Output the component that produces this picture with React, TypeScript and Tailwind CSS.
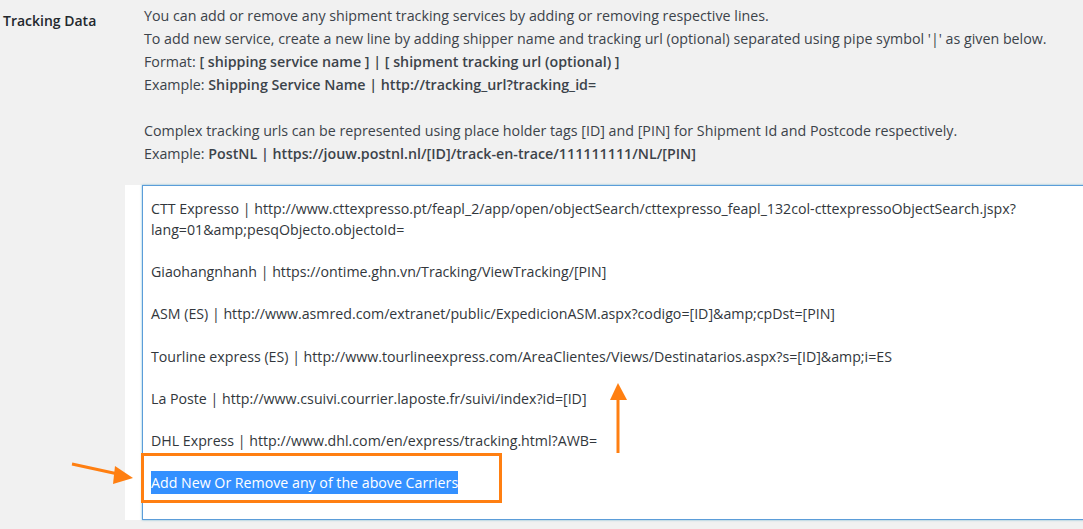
import React from "react";

const font = { fontFamily: '"Open Sans", "Noto Sans", Arial, sans-serif' };

const lines: string[] = [
  "CTT Expresso | http://www.cttexpresso.pt/feapl_2/app/open/objectSearch/cttexpresso_feapl_132col-cttexpressoObjectSearch.jspx?",
  "lang=01&amp;pesqObjecto.objectoId=",
  "",
  "Giaohangnhanh | https://ontime.ghn.vn/Tracking/ViewTracking/[PIN]",
  "",
  "ASM (ES) | http://www.asmred.com/extranet/public/ExpedicionASM.aspx?codigo=[ID]&amp;cpDst=[PIN]",
  "",
  "Tourline express (ES) | http://www.tourlineexpress.com/AreaClientes/Views/Destinatarios.aspx?s=[ID]&amp;i=ES",
  "",
  "La Poste | http://www.csuivi.courrier.laposte.fr/suivi/index?id=[ID]",
  "",
  "DHL Express | http://www.dhl.com/en/express/tracking.html?AWB=",
  "",
];

export default function App() {
  return (
    <div
      className="relative w-[1083px] h-[529px] overflow-hidden bg-[#f1f1f1] flex text-[#3c434a]"
      style={font}
    >
      <div className="w-[125px] shrink-0 pl-[3px] pt-[9px] text-[14px] leading-[23px] font-semibold text-[#23282d]">
        Tracking Data
      </div>
      <div className="flex-1 min-w-0 flex flex-col">
        <div className="pl-[19px] pt-[4px] text-[14.25px] leading-[23px] whitespace-nowrap">
          <div>You can add or remove any shipment tracking services by adding or removing respective lines.</div>
          <div>
            To add new service, create a new line by adding shipper name and tracking url (optional) separated using pipe symbol '|' as given below.
          </div>
          <div>
            Format: <b className="font-semibold">[ shipping service name ] | [ shipment tracking url (optional) ]</b>
          </div>
          <div>
            Example: <b className="font-semibold">Shipping Service Name | http://tracking_url?tracking_id=</b>
          </div>
          <div>&nbsp;</div>
          <div>
            Complex tracking urls can be represented using place holder tags [ID] and [PIN] for Shipment Id and Postcode respectively.
          </div>
          <div>
            Example: <b className="font-semibold">PostNL | https://jouw.postnl.nl/[ID]/track-en-trace/111111111/NL/[PIN]</b>
          </div>
        </div>
        <div className="mt-[20px] w-[1000px] shrink-0 bg-white pl-[17px]">
          <div className="h-[335px] border border-[#5b9dd9] shadow-[0_0_2px_rgba(30,140,190,0.6)] pl-[8px] pt-[12px] text-[14.2px] leading-[21.1px] text-[#32373c] whitespace-pre">
            {lines.map((l, i) => (
              <div key={i}>{l === "" ? "\u00a0" : l}</div>
            ))}
            <div>
              <span className="bg-[#3390ff] text-white py-[2px]">Add New Or Remove any of the above Carriers</span>
            </div>
          </div>
        </div>
      </div>

      {/* annotation: orange box */}
      <div className="absolute left-[141px] top-[453px] w-[361px] h-[50px] border-[3px] border-[#ff7f11] pointer-events-none" />

      {/* annotation arrows */}
      <svg
        className="absolute left-0 top-0 pointer-events-none"
        width="1083"
        height="529"
        viewBox="0 0 1083 529"
      >
        <line x1="72" y1="464" x2="118" y2="474" stroke="#ff7f11" strokeWidth="3" />
        <polygon points="115,466 133,478 113,484" fill="#ff7f11" />
        <line x1="618" y1="453" x2="618" y2="398" stroke="#ff7f11" strokeWidth="3" />
        <polygon points="610,400 618,383 627,400" fill="#ff7f11" />
      </svg>
    </div>
  );
}
